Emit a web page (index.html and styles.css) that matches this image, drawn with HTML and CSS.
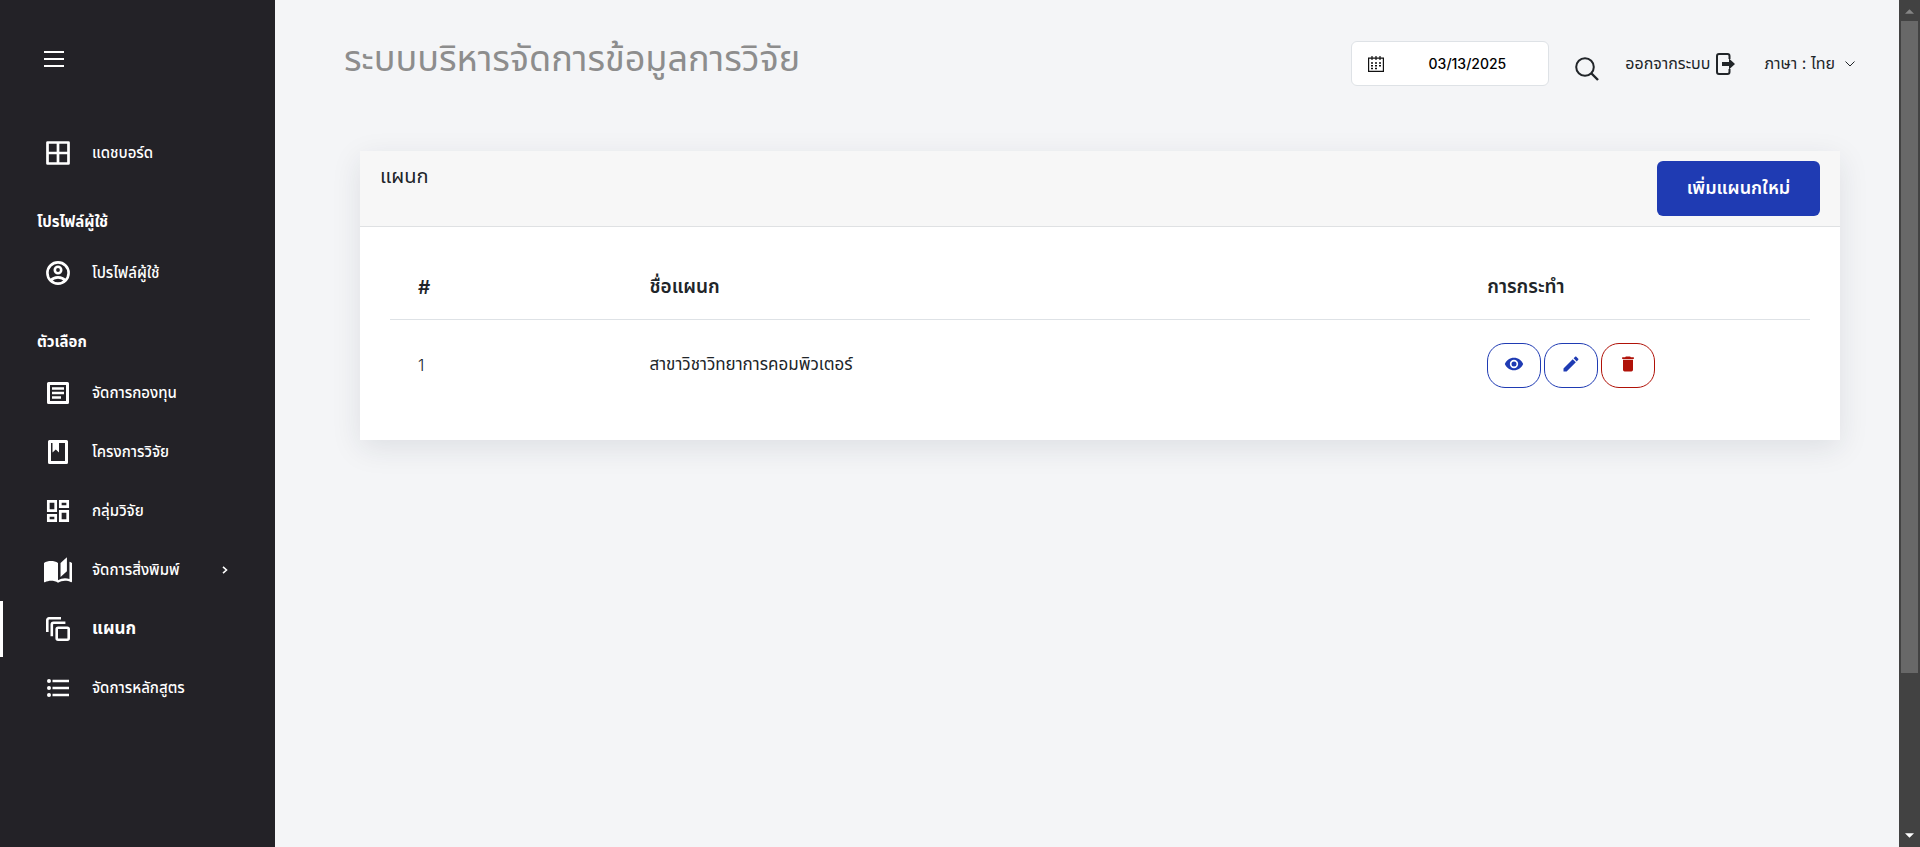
FILE: index.html
```html
<!DOCTYPE html>
<html lang="th">
<head>
<meta charset="utf-8">
<title>ระบบบริหารจัดการข้อมูลการวิจัย</title>
<link rel="stylesheet" href="styles.css">
</head>
<body>
<div class="app">
  <aside class="sidebar">
    <button class="menu-toggle" type="button" aria-label="เมนู">
      <svg width="20" height="16" viewBox="0 0 20 16"><path d="M0 1h20M0 8h20M0 15h20" stroke="currentColor" stroke-width="2"/></svg>
    </button>
    <nav class="nav">
      <a class="nav-item" href="#">
        <svg class="nav-icon" viewBox="0 0 24 24"><path d="M1.500 1.500h21v21h-21zM12 1.500v21M1.500 12h21" fill="none" stroke="currentColor" stroke-width="2.700" stroke-linejoin="round"/></svg>
        <span>แดชบอร์ด</span>
      </a>
      <h2 class="nav-title">โปรไฟล์ผู้ใช้</h2>
      <a class="nav-item" href="#">
        <svg class="nav-icon" viewBox="0 0 24 24"><g fill="none" stroke="currentColor" stroke-width="2.600"><circle cx="12" cy="12" r="10.600"/><circle cx="12" cy="9" r="3.200"/><path d="M4.800 19.500c1.600-2 4.400-3.100 7.200-3.100s5.600 1.100 7.200 3.100"/></g></svg>
        <span>โปรไฟล์ผู้ใช้</span>
      </a>
      <h2 class="nav-title">ตัวเลือก</h2>
      <a class="nav-item" href="#">
        <svg class="nav-icon" viewBox="0 0 24 24"><path d="M2.500 2.500h19v19h-19z" fill="none" stroke="currentColor" stroke-width="3" stroke-linejoin="round"/><path d="M6 7.500h12M6 12h12M6 16.500h9" stroke="currentColor" stroke-width="2.400"/></svg>
        <span>จัดการกองทุน</span>
      </a>
      <a class="nav-item" href="#">
        <svg class="nav-icon" viewBox="0 0 24 24"><path d="M3.500 1.500h17v21h-17z" fill="none" stroke="currentColor" stroke-width="3" stroke-linejoin="round"/><path d="M6.500 2h6.500v10.500l-3.250-3-3.250 3z" fill="currentColor"/></svg>
        <span>โครงการวิจัย</span>
      </a>
      <a class="nav-item" href="#">
        <svg class="nav-icon" viewBox="0 0 24 24"><path d="M2.300 2.300h7.400v9.400H2.300zM14.300 2.300h7.400v5.400h-7.400zM14.300 12.300h7.400v9.400h-7.400zM2.300 16.300h7.400v5.400H2.300z" fill="none" stroke="currentColor" stroke-width="2.700"/></svg>
        <span>กลุ่มวิจัย</span>
      </a>
      <a class="nav-item" href="#">
        <svg class="nav-icon nav-icon-wide" viewBox="1 1 22 22"><path fill="currentColor" d="M19 2l-5 4.500v11l5-4.500V2M6.500 5C4.550 5 2.450 5.400 1 6.500v14.660c0 .25.25.5.5.5.1 0 .15-.07.25-.07 1.350-.65 3.300-1.090 4.750-1.090 1.950 0 4.050.4 5.500 1.500 1.350-.85 3.800-1.500 5.500-1.500 1.650 0 3.350.31 4.750 1.060.1.050.15.030.25.030.25 0 .5-.25.5-.5V6.500c-.6-.45-1.250-.75-2-1V19c-1.100-.35-2.300-.5-3.500-.5-1.700 0-4.150.65-5.500 1.500V6.500C10.550 5.400 8.450 5 6.500 5z"/></svg>
        <span>จัดการสิ่งพิมพ์</span>
        <svg class="nav-caret" viewBox="0 0 6 8"><path d="M1 .8l3.500 3.200L1 7.200" fill="none" stroke="currentColor" stroke-width="1.600"/></svg>
      </a>
      <a class="nav-item active" href="#" aria-current="page">
        <svg class="nav-icon" viewBox="0 0 24 24"><g fill="none" stroke="currentColor" stroke-width="2.600"><path d="M1.300 15V3A1.700 1.700 0 0 1 3 1.300h12M5.800 19.200V7.500a1.700 1.700 0 0 1 1.700-1.700h11.900"/><rect x="10.700" y="10.700" width="12" height="12" rx="1.400"/></g></svg>
        <span>แผนก</span>
      </a>
      <a class="nav-item" href="#">
        <svg class="nav-icon" viewBox="0 0 24 24"><path d="M6.500 5H23M6.500 12H23M6.500 19H23" stroke="currentColor" stroke-width="2.700"/><g fill="currentColor"><circle cx="3" cy="5" r="2"/><circle cx="3" cy="12" r="2"/><circle cx="3" cy="19" r="2"/></g></svg>
        <span>จัดการหลักสูตร</span>
      </a>
    </nav>
  </aside>

  <div class="page">
    <header class="topbar">
      <h1 class="app-title">ระบบบริหารจัดการข้อมูลการวิจัย</h1>
      <div class="tools">
        <label class="date-box">
          <svg width="16" height="16" viewBox="0 0 16 16"><path d="M.6 2.100h14.800v13.200H.6zM4 0v4M8 0v4M12 0v4" fill="none" stroke="#111" stroke-width="1.200"/><path d="M3 7h2M7 7h2M11 7h2M3 9.700h2M7 9.700h2M11 9.700h2M3 12.400h2M7 12.400h2" stroke="#111" stroke-width="1.500"/></svg>
          <input type="text" value="03/13/2025" aria-label="วันที่">
        </label>
        <button class="search" type="button" aria-label="ค้นหา">
          <svg width="24" height="24" viewBox="0 0 24 24"><circle cx="10" cy="10" r="8.800" fill="none" stroke="currentColor" stroke-width="2"/><path d="M16 16l7 7" stroke="currentColor" stroke-width="2.400"/></svg>
        </button>
        <a class="tool-link logout" href="#">ออกจากระบบ
          <svg width="20" height="22" viewBox="0 0 20 22"><path d="M13.500 6V3a2 2 0 0 0-2-2H3a2 2 0 0 0-2 2v16a2 2 0 0 0 2 2h8.500a2 2 0 0 0 2-2v-3" fill="none" stroke="currentColor" stroke-width="2"/><path d="M6 9h7V5.500l6 5.500-6 5.500V13H6z" fill="currentColor"/></svg>
        </a>
        <a class="tool-link language" href="#">ภาษา : ไทย
          <svg width="10" height="6" viewBox="0 0 10 6"><path d="M.5.500L5 5 9.500.500" fill="none" stroke="currentColor"/></svg>
        </a>
      </div>
    </header>

    <main class="content">
      <section class="card">
        <div class="card-head">
          <h2 class="card-title">แผนก</h2>
          <button class="add" type="button">เพิ่มแผนกใหม่</button>
        </div>
        <div class="card-body">
          <table class="table">
            <thead><tr><th class="col-no">#</th><th class="col-name">ชื่อแผนก</th><th>การกระทำ</th></tr></thead>
            <tbody>
              <tr>
                <td class="number">1</td>
                <td>สาขาวิชาวิทยาการคอมพิวเตอร์</td>
                <td>
                  <div class="actions">
                    <button class="action" type="button" aria-label="ดู"><svg viewBox="0 0 24 24"><path fill="currentColor" d="M12 9a3 3 0 1 0 0 6 3 3 0 0 0 0-6m0 8a5 5 0 1 1 0-10 5 5 0 0 1 0 10m0-12.500C7 4.500 2.730 7.610 1 12c1.730 4.390 6 7.500 11 7.500s9.270-3.110 11-7.500c-1.730-4.390-6-7.500-11-7.500z"/></svg></button>
                    <button class="action" type="button" aria-label="แก้ไข"><svg viewBox="0 0 24 24"><path fill="currentColor" d="M20.710 7.040c.39-.39.39-1.040 0-1.410l-2.340-2.340c-.37-.39-1.020-.39-1.410 0l-1.840 1.830 3.750 3.750M3 17.250V21h3.750L17.810 9.930l-3.750-3.750L3 17.250z"/></svg></button>
                    <button class="action danger" type="button" aria-label="ลบ"><svg viewBox="0 0 24 24"><path fill="currentColor" d="M19 4h-3.500l-1-1h-5l-1 1H5v2h14M6 19a2 2 0 0 0 2 2h8a2 2 0 0 0 2-2V7H6v12z"/></svg></button>
                  </div>
                </td>
              </tr>
            </tbody>
          </table>
        </div>
      </section>
    </main>
  </div>

  <div class="scrollbar" aria-hidden="true">
    <svg class="arrow dim" viewBox="0 0 10 5"><path d="M0 5l5-5 5 5z" fill="currentColor"/></svg>
    <div class="track"><div class="thumb"></div></div>
    <svg class="arrow" viewBox="0 0 10 5"><path d="M0 0l5 5 5-5z" fill="currentColor"/></svg>
  </div>
</div>
</body>
</html>
```
FILE: styles.css
```css
* { box-sizing: border-box; }

body {
  margin: 0;
  background: #f4f5f7;
  color: #212529;
  font-family: Inter, "Noto Sans Thai", "Noto Sans", sans-serif;
  font-size: 17px;
}

button, input { font: inherit; color: inherit; }
h1, h2 { margin: 0; font-weight: 400; }
a { color: inherit; text-decoration: none; }
svg { display: block; flex: none; }

.app { display: flex; min-height: 100vh; }

.sidebar {
  width: 275px;
  flex: none;
  background: #232227;
  color: #fff;
}
.menu-toggle {
  display: block;
  margin: 51px 0 0 44px;
  padding: 0;
  border: 0;
  background: none;
}
.nav {
  display: flex;
  flex-direction: column;
  gap: 3px;
  padding-top: 58px;
}
.nav-item {
  position: relative;
  display: flex;
  align-items: center;
  gap: 22px;
  height: 56px;
  padding-left: 46px;
  font-size: 15px;
  font-weight: 500;
  white-space: nowrap;
}
.nav-icon { width: 24px; height: 24px; }
.nav-icon-wide { width: 28px; height: 28px; margin: 0 -2px; }
.nav-caret { width: 6px; height: 8px; margin: 0 47px 0 auto; }
.nav-title {
  padding: 20px 37px 0;
  height: 58px;
  font-size: 15px;
  line-height: 36px;
  font-weight: 700;
}
.active { font-size: 17px; font-weight: 700; }
.active::before {
  content: "";
  position: absolute;
  left: 0;
  top: 0;
  width: 3px;
  height: 100%;
  background: #fff;
}

.page { flex: 1; min-width: 0; }
.topbar {
  display: flex;
  justify-content: space-between;
  align-items: flex-start;
  padding: 35px 44px 0 69px;
}
.app-title { color: #8d8d8d; font-size: 36px; line-height: 46px; }
.tools { display: flex; align-items: center; padding-top: 6px; }
.date-box {
  display: flex;
  align-items: center;
  width: 198px;
  height: 45px;
  padding-left: 16px;
  border: 1px solid #dee2e6;
  border-radius: 6px;
  background: #fff;
}
.date-box input {
  flex: 1;
  min-width: 0;
  padding: 0 42px 0 0;
  border: 0;
  outline: 0;
  background: none;
  color: #000;
  font-size: 14px;
  font-weight: 500;
  text-align: right;
}
.search { margin: 10px 26px 0; padding: 0; border: 0; background: none; }
.tool-link { display: flex; align-items: center; gap: 6px; font-size: 16px; white-space: nowrap; }
.language { gap: 10px; margin-left: 28px; }

.content { padding: 65px 59px 0 85px; }
.card { background: #fff; box-shadow: 0 8px 28px rgba(30, 40, 60, .1); }
.card-head {
  display: flex;
  justify-content: space-between;
  align-items: flex-start;
  padding: 10px 20px;
  border-bottom: 1px solid #dfe1e3;
  background: #f7f7f7;
}
.card-title { font-size: 20px; line-height: 30px; }
.add {
  width: 163px;
  height: 55px;
  border: 0;
  border-radius: 6px;
  background: #1f3bb3;
  color: #fff;
  font-size: 18px;
  font-weight: 600;
}
.card-body { padding: 30px 30px 29px; }
.table { width: 100%; border-collapse: collapse; table-layout: fixed; text-align: left; }
.table th {
  height: 62px;
  padding: 0 28px;
  border-bottom: 1px solid #dee2e6;
  font-size: 19px;
  font-weight: 600;
}
.table td { height: 92px; padding: 0 28px; }
.table .number { font-size: 16px; font-weight: 300; }
.table .col-no { width: 16.3%; }
.table .col-name { width: 59%; }
.actions { display: flex; gap: 3px; }
.action {
  display: flex;
  align-items: center;
  justify-content: center;
  width: 54px;
  height: 45px;
  padding: 0 0 3px;
  border: 1px solid #1f3bb3;
  border-radius: 18px;
  background: #fff;
  color: #1f3bb3;
}
.action svg { width: 20px; height: 20px; }
.danger { border-color: #b01208; color: #b01208; }

.scrollbar {
  display: flex;
  flex-direction: column;
  align-items: center;
  width: 21px;
  flex: none;
  padding: 9px 2px;
  background: #424242;
  color: #fff;
}
.arrow { width: 9px; height: 5px; }
.dim { color: #858585; }
.track { flex: 1; align-self: stretch; padding: 7px 0; }
.thumb { height: 81%; background: #686868; }
```
